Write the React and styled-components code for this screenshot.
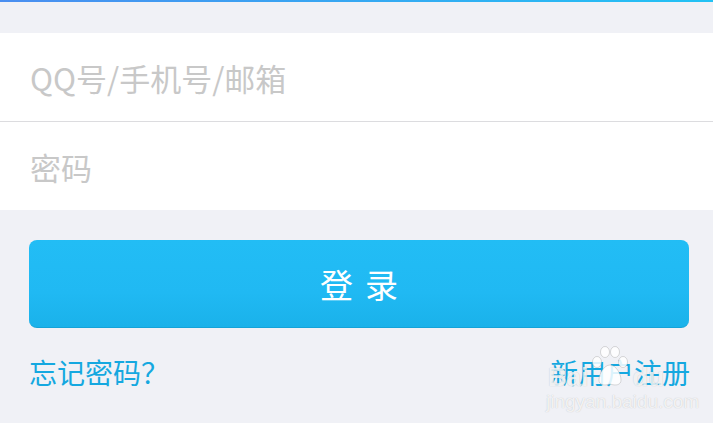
import React from 'react';
import styled, { createGlobalStyle } from 'styled-components';

const GlobalStyle = createGlobalStyle`
  html, body {
    margin: 0;
    padding: 0;
    background: #f0f1f6;
    font-family: "Noto Sans CJK SC", "Noto Sans", sans-serif;
  }
`;

const Page = styled.div`
  position: relative;
  width: 713px;
  height: 423px;
  overflow: hidden;
  background: #f0f1f6;
  border-top: 2px solid transparent;
  border-image: linear-gradient(90deg, #4a8ef0, #22c2f4) 1;
  box-sizing: border-box;
  padding-top: 31px;
`;

const Panel = styled.div`
  background: #fff;
  display: flex;
  flex-direction: column;
`;

const Field = styled.input`
  height: 88px;
  border: none;
  border-top: ${p => (p.$divider ? '1px solid #dcdcdf' : 'none')};
  outline: none;
  padding: 0 30px;
  font-family: inherit;
  font-size: 31px;
  color: #333;
  background: transparent;
  &::placeholder {
    color: #c8c8c8;
  }
`;

const Actions = styled.div`
  padding: 30px 24px 0 29px;
`;

const LoginButton = styled.button`
  width: 660px;
  height: 88px;
  border: none;
  border-bottom: 1px solid #14a3d8;
  border-radius: 8px;
  background: linear-gradient(180deg, #22bdf5 0%, #20b9f3 60%, #1ab2ea 100%);
  color: #fff;
  font-family: inherit;
  font-size: 33px;
  letter-spacing: 12px;
  text-indent: 12px;
  cursor: pointer;
`;

const Links = styled.div`
  display: flex;
  justify-content: space-between;
  width: 661px;
  margin-top: 24px;
`;

const Link = styled.a`
  color: #15a8e0;
  font-size: 28px;
  text-decoration: none;
`;

const Watermark = styled.div`
  position: absolute;
  left: 546px;
  top: 344px;
  display: flex;
  flex-direction: column;
  align-items: flex-start;
  color: rgba(255, 255, 255, 0.8);
  font-family: "Liberation Sans", sans-serif;
  pointer-events: none;
  text-shadow: 0 0 1px rgba(110, 110, 110, 0.4);
`;

const Brand = styled.div`
  display: flex;
  align-items: flex-end;
  font-size: 26px;
  font-weight: bold;
  line-height: 1;
  height: 44px;
  padding-left: 2px;
`;

const WatermarkSite = styled.span`
  font-size: 19px;
  margin-top: 1px;
`;

const Paw = () => (
  <svg width="40" height="44" viewBox="0 0 40 44" style={{ margin: '0 2px' }}>
    <g fill="rgba(255,255,255,0.85)" stroke="rgba(150,150,150,0.35)" strokeWidth="1">
      <ellipse cx="7" cy="16" rx="4.5" ry="5.5" />
      <ellipse cx="15" cy="6" rx="4.5" ry="5.5" />
      <ellipse cx="25" cy="6" rx="4.5" ry="5.5" />
      <ellipse cx="33" cy="16" rx="4.5" ry="5.5" />
      <path d="M20 19c6 0 11 9 11 15 0 5-5 6-11 4-6 2-11 1-11-4 0-6 5-15 11-15z" />
    </g>
  </svg>
);

export default function App() {
  return (
    <>
      <GlobalStyle />
      <Page>
        <Panel>
          <Field placeholder="QQ号/手机号/邮箱" />
          <Field $divider type="password" placeholder="密码" />
        </Panel>
        <Actions>
          <LoginButton>登录</LoginButton>
          <Links>
            <Link href="#">忘记密码？</Link>
            <Link href="#">新用户注册</Link>
          </Links>
        </Actions>
        <Watermark>
          <Brand>
            <span>Bai</span>
            <Paw />
            <span>du</span>
          </Brand>
          <WatermarkSite>jingyan.baidu.com</WatermarkSite>
        </Watermark>
      </Page>
    </>
  );
}
